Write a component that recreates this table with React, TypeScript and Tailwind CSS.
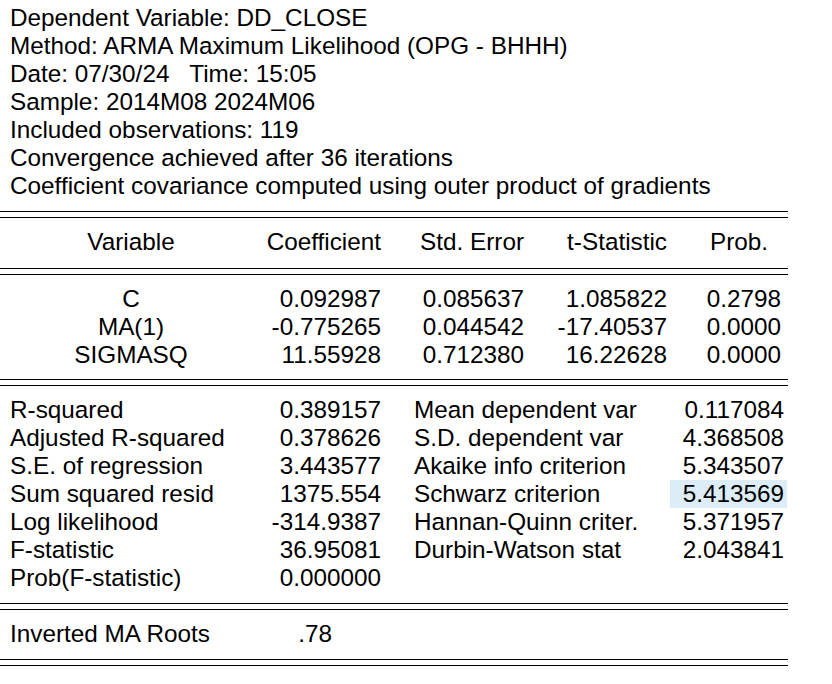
const header = [
  'Dependent Variable: DD_CLOSE',
  'Method: ARMA Maximum Likelihood (OPG - BHHH)',
  'Date: 07/30/24   Time: 15:05',
  'Sample: 2014M08 2024M06',
  'Included observations: 119',
  'Convergence achieved after 36 iterations',
  'Coefficient covariance computed using outer product of gradients',
];

const coefs = [
  ['C', '0.092987', '0.085637', '1.085822', '0.2798'],
  ['MA(1)', '-0.775265', '0.044542', '-17.40537', '0.0000'],
  ['SIGMASQ', '11.55928', '0.712380', '16.22628', '0.0000'],
];

const stats = [
  ['R-squared', '0.389157', 'Mean dependent var', '0.117084'],
  ['Adjusted R-squared', '0.378626', 'S.D. dependent var', '4.368508'],
  ['S.E. of regression', '3.443577', 'Akaike info criterion', '5.343507'],
  ['Sum squared resid', '1375.554', 'Schwarz criterion', '5.413569'],
  ['Log likelihood', '-314.9387', 'Hannan-Quinn criter.', '5.371957'],
  ['F-statistic', '36.95081', 'Durbin-Watson stat', '2.043841'],
  ['Prob(F-statistic)', '0.000000', '', ''],
];

function Rule() {
  return <div className="h-[7px] w-[788px] border-y border-black" />;
}

export default function App() {
  return (
    <div
      className="w-[832px] h-[684px] bg-white text-black text-[24.3px] leading-[28px] whitespace-pre"
      style={{ fontFamily: '"Liberation Sans", Arial, sans-serif' }}
    >
      <div className="pl-[10px] pt-[4px] pb-[11px]">
        {header.map((line) => (
          <div key={line}>{line}</div>
        ))}
      </div>

      <Rule />
      <div className="flex pt-[10px] pb-[12px]">
        <div className="w-[262px] text-center">Variable</div>
        <div className="w-[119px] text-right">Coefficient</div>
        <div className="w-[143px] text-right">Std. Error</div>
        <div className="w-[143px] text-right">t-Statistic</div>
        <div className="w-[117px] text-right pr-[16px]">Prob.</div>
      </div>

      <Rule />
      <div className="pt-[10px] pb-[10px]">
        {coefs.map((r) => (
          <div key={r[0]} className="flex">
            <div className="w-[262px] text-center">{r[0]}</div>
            <div className="w-[119px] text-right">{r[1]}</div>
            <div className="w-[143px] text-right">{r[2]}</div>
            <div className="w-[143px] text-right">{r[3]}</div>
            <div className="w-[117px] text-right pr-[3px]">{r[4]}</div>
          </div>
        ))}
      </div>

      <Rule />
      <div className="pt-[10px] pb-[11px]">
        {stats.map((r) => (
          <div key={r[0]} className="flex h-[28px]">
            <div className="w-[250px] pl-[10px]">{r[0]}</div>
            <div className="w-[131px] text-right">{r[1]}</div>
            <div className="w-[289px] pl-[33px]">{r[2]}</div>
            <div className={`w-[117px] text-right pr-[3px] ${r[2] === 'Schwarz criterion' ? 'bg-[#dcedf8]' : ''}`}>
              {r[3]}
            </div>
          </div>
        ))}
      </div>

      <Rule />
      <div className="flex pt-[10px] pb-[11px]">
        <div className="w-[250px] pl-[10px]">Inverted MA Roots</div>
        <div className="w-[82px] text-right">.78</div>
      </div>
      <Rule />
    </div>
  );
}
